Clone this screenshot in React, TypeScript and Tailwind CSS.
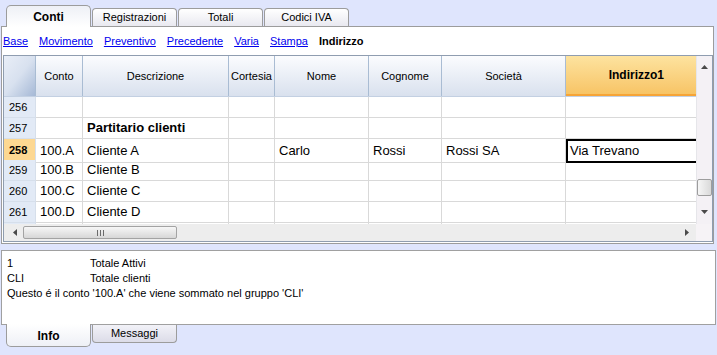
import React from "react";

const COLS = "grid grid-cols-[32px_47px_146px_46px_94px_73px_124px_130px]";

const headers = ["Conto", "Descrizione", "Cortesia", "Nome", "Cognome", "Società"];

type Row = { n: string; cells: string[]; bold?: boolean; active?: boolean };

const rows: Row[] = [
  { n: "256", cells: ["", "", "", "", "", "", ""] },
  { n: "257", cells: ["", "Partitario clienti", "", "", "", "", ""], bold: true },
  { n: "258", cells: ["100.A", "Cliente A", "", "Carlo", "Rossi", "Rossi SA", "Via Trevano"], active: true },
  { n: "259", cells: ["100.B", "Cliente B", "", "", "", "", ""] },
  { n: "260", cells: ["100.C", "Cliente C", "", "", "", "", ""] },
  { n: "261", cells: ["100.D", "Cliente D", "", "", "", "", ""] },
  { n: "262", cells: ["", "", "", "", "", "", ""] },
];

const links = ["Base", "Movimento", "Preventivo", "Precedente", "Varia", "Stampa"];

const Arrow = ({ dir }: { dir: "up" | "down" | "left" | "right" }) => {
  const pts = {
    up: "0,4 7,4 3.5,0",
    down: "0,0 7,0 3.5,4",
    left: "4,0 4,7 0,3.5",
    right: "0,0 0,7 4,3.5",
  }[dir];
  const w = dir === "up" || dir === "down" ? 7 : 4;
  const h = dir === "up" || dir === "down" ? 4 : 7;
  return (
    <svg width={w} height={h} viewBox={`0 0 ${w} ${h}`}>
      <polygon points={pts} fill="#4a4a4a" />
    </svg>
  );
};

const TopTab = ({ label, active }: { label: string; active?: boolean }) =>
  active ? (
    <div className="relative z-10 -mb-px flex h-[22px] w-[85px] items-center justify-center rounded-t-[5px] border border-b-0 border-[#9c9c9c] bg-linear-to-b from-[#eef0f6] to-white text-[12px] font-bold">
      {label}
    </div>
  ) : (
    <div className="flex h-[18px] w-[85px] items-center justify-center rounded-t-[4px] border border-b-0 border-[#9c9c9c] bg-linear-to-b from-white to-[#e9e9f0] text-[11px]">
      {label}
    </div>
  );

export default function App() {
  return (
    <div className="h-[355px] w-[717px] overflow-hidden bg-[#dfe5fd] font-['Liberation_Sans',Arial,sans-serif] text-black">
      {/* top tabs */}
      <div className="flex h-[26px] items-end gap-px pl-[6px]">
        <TopTab label="Conti" active />
        <TopTab label="Registrazioni" />
        <TopTab label="Totali" />
        <TopTab label="Codici IVA" />
      </div>

      {/* main panel */}
      <div className="ml-px w-[713px] border border-[#9c9c9c] bg-white pb-px">
        <div className="flex h-[28px] items-center gap-[11px] pl-px text-[11px]">
          {links.map((l) => (
            <span key={l} className="text-[#0000ee] underline">
              {l}
            </span>
          ))}
          <span className="font-bold">Indirizzo</span>
        </div>

        {/* grid */}
        <div className="ml-px w-[710px] border border-[#8f9db0]">
          <div className="flex">
            <div className="w-[692px]">
              {/* header */}
              <div className={`${COLS} h-[41px] border-b border-[#c3d0e2] text-[11px]`}>
                <div className="border-r border-[#a9bcd3] bg-linear-to-br from-[#e9eef7] via-[#d8e1ef] to-[#a6b9d6]" />
                {headers.map((h) => (
                  <div
                    key={h}
                    className="flex items-center justify-center border-r border-[#a9bcd3] bg-linear-to-b from-[#fbfcfe] to-[#d9e1ee]"
                  >
                    {h}
                  </div>
                ))}
                <div className="flex items-center justify-end border-b-2 border-[#f6a436] bg-linear-to-b from-[#fde39f] to-[#f7c465] pr-[32px] text-[12px] font-bold">
                  Indirizzo1
                </div>
              </div>

              {/* rows */}
              <div className="h-[127px] overflow-hidden">
                {rows.map((r) => (
                  <div key={r.n} className={`${COLS} h-[21px]`}>
                    <div
                      className={`flex items-center border-r border-b border-[#d6dfeb] pl-[5px] text-[11px] ${
                        r.active ? "bg-[#fdd892] font-bold" : "bg-[#e2eaf6]"
                      }`}
                    >
                      {r.n}
                    </div>
                    {r.cells.map((c, i) =>
                      r.active && i === 6 ? (
                        <div
                          key={i}
                          className="flex items-center border-y-2 border-l-2 border-black pl-[2px] text-[13px]"
                        >
                          {c}
                        </div>
                      ) : (
                        <div
                          key={i}
                          className={`flex items-center overflow-hidden whitespace-nowrap border-b border-[#d9d9d9] pl-[4px] text-[13px] ${
                            i < 6 ? "border-r" : ""
                          } ${r.bold ? "font-bold" : ""}`}
                        >
                          {c}
                        </div>
                      )
                    )}
                  </div>
                ))}
              </div>
            </div>

            {/* vertical scrollbar */}
            <div className="flex w-[16px] flex-col items-center border-l border-[#e6e6ea] bg-[#f4f1f5]">
              <div className="flex h-[16px] items-center justify-center pt-[6px]">
                <Arrow dir="up" />
              </div>
              <div className="flex-1" />
              <div className="h-[17px] w-[15px] rounded-[2px] border border-[#9d9d9d] bg-linear-to-r from-[#f6f6f6] to-[#d9d9d9]" />
              <div className="flex h-[28px] items-center justify-center pt-[4px]">
                <Arrow dir="down" />
              </div>
            </div>
          </div>

          {/* horizontal scrollbar */}
          <div className="flex h-[17px]">
            <div className="flex w-[692px] items-center bg-[#ededed]">
              <div className="flex w-[19px] justify-center pl-[2px]">
                <Arrow dir="left" />
              </div>
              <div className="flex h-[13px] w-[154px] items-center justify-center rounded-[2px] border border-[#a3a3a3] bg-linear-to-b from-[#f7f7f7] to-[#d7d7d7]">
                <div className="flex gap-[2px]">
                  <div className="h-[6px] w-px bg-[#6b6b6b]" />
                  <div className="h-[6px] w-px bg-[#6b6b6b]" />
                  <div className="h-[6px] w-px bg-[#6b6b6b]" />
                </div>
              </div>
              <div className="flex-1" />
              <div className="flex w-[16px] justify-center pr-[2px]">
                <Arrow dir="right" />
              </div>
            </div>
            <div className="w-[16px] bg-[#f6f3f6]" />
          </div>
        </div>
      </div>

      {/* info panel */}
      <div className="mt-[6px] ml-px h-[75px] w-[715px] border border-[#a0a0a0] bg-white pt-[5px] pl-[5px] text-[11px] leading-[15px]">
        <div className="flex">
          <span className="w-[83px]">1</span>
          <span>Totale Attivi</span>
        </div>
        <div className="flex">
          <span className="w-[83px]">CLI</span>
          <span>Totale clienti</span>
        </div>
        <div>Questo é il conto '100.A' che viene sommato nel gruppo 'CLI'</div>
      </div>

      {/* bottom tabs */}
      <div className="flex items-start gap-px pl-[6px]">
        <div className="relative z-10 -mt-px flex h-[23px] w-[85px] items-center justify-center rounded-b-[5px] border border-t-0 border-[#9c9c9c] bg-linear-to-b from-white to-[#eef0f6] pt-px text-[12px] font-bold">
          Info
        </div>
        <div className="flex h-[18px] w-[85px] items-center justify-center rounded-b-[4px] border border-t-0 border-[#9c9c9c] bg-linear-to-b from-[#f2f2f8] to-[#dcdce8] text-[11px]">
          Messaggi
        </div>
      </div>
    </div>
  );
}
